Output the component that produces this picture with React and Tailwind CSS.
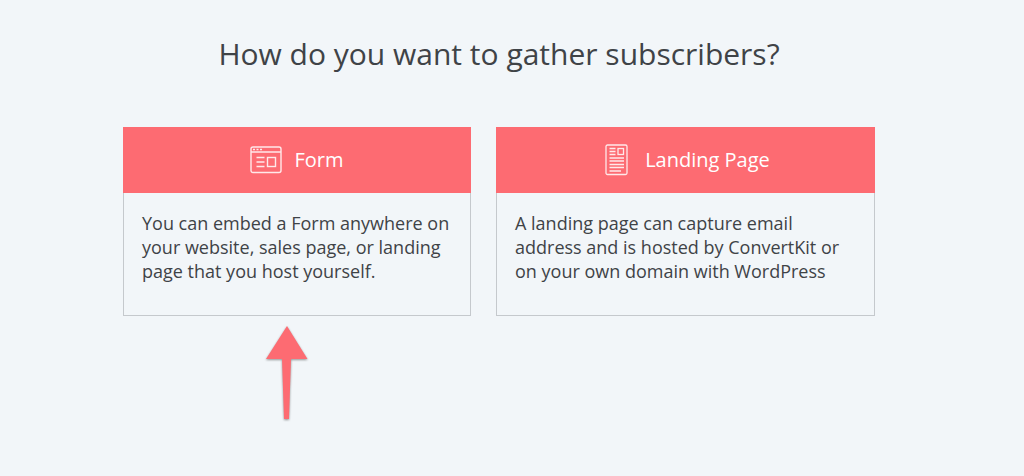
function FormIcon() {
  return (
    <svg width="32" height="32" viewBox="0 0 32 32" fill="none" stroke="#ffe9ea" strokeWidth="1.4" aria-hidden="true">
      <rect x="1" y="3" width="30" height="25.500" rx="2" />
      <path d="M1 8H31M6.500 13.500H14.500M6.500 18H14.500M6.500 22.500H14.500" />
      <path d="M3 5.500H5M6.500 5.500H8.500M10 5.500H12" strokeWidth="1.6" />
      <rect x="17.500" y="13.500" width="8" height="9" />
    </svg>
  );
}

function PageIcon() {
  return (
    <svg width="32" height="32" viewBox="0 0 32 32" fill="none" stroke="#ffe9ea" strokeWidth="1.3" aria-hidden="true">
      <rect x="5" y="1" width="21" height="29.500" rx="1.500" />
      <path d="M8.500 4.500H14.500M8.500 7.500H14.500M8.500 10.500H14.500M8.500 14H23M8.500 17H23M8.500 20.500H23M8.500 23.500H23M8.500 27H20" />
      <rect x="17" y="4.500" width="5.500" height="6" />
    </svg>
  );
}

function Option({ icon, title, children }) {
  return (
    <button type="button" className="flex w-full flex-col text-left">
      <span className="flex h-[66px] w-full items-center justify-center gap-3 bg-[#fd6b72] text-xl text-white">
        {icon}
        {title}
      </span>
      <span className="block w-full grow border border-t-0 border-[#c5c9cd] px-[18px] pt-[18px] pb-[32px] text-[18px] leading-[24px]">
        {children}
      </span>
    </button>
  );
}

function PointerArrow() {
  return (
    <svg width="50" height="102" viewBox="0 0 50 102" className="mt-[9px] ml-[139px] overflow-visible drop-shadow-[0_1px_1px_rgba(0,0,0,0.4)]" aria-hidden="true">
      <path d="M25 1L45.500 34H29L27 94H22L20 34H4Z" fill="#fd6b72" />
    </svg>
  );
}

export default function App() {
  return (
    <main className="min-h-screen bg-[#f2f6f9] pt-[33px] pr-[26px] font-['Open_Sans',sans-serif] text-[#3f4347]">
      <h1 className="text-center text-[30px] leading-[42px]">How do you want to gather subscribers?</h1>
      <div className="mx-auto mt-[52px] w-full max-w-[752px]">
        <div className="grid grid-cols-[348fr_379fr] gap-[25px]">
          <Option icon={<FormIcon />} title="Form">
            You can embed a Form anywhere on<br />your website, sales page, or landing<br />page that you host yourself.
          </Option>
          <Option icon={<PageIcon />} title="Landing Page">
            A landing page can capture email<br />address and is hosted by ConvertKit or<br />on your own domain with WordPress
          </Option>
        </div>
        <PointerArrow />
      </div>
    </main>
  );
}
